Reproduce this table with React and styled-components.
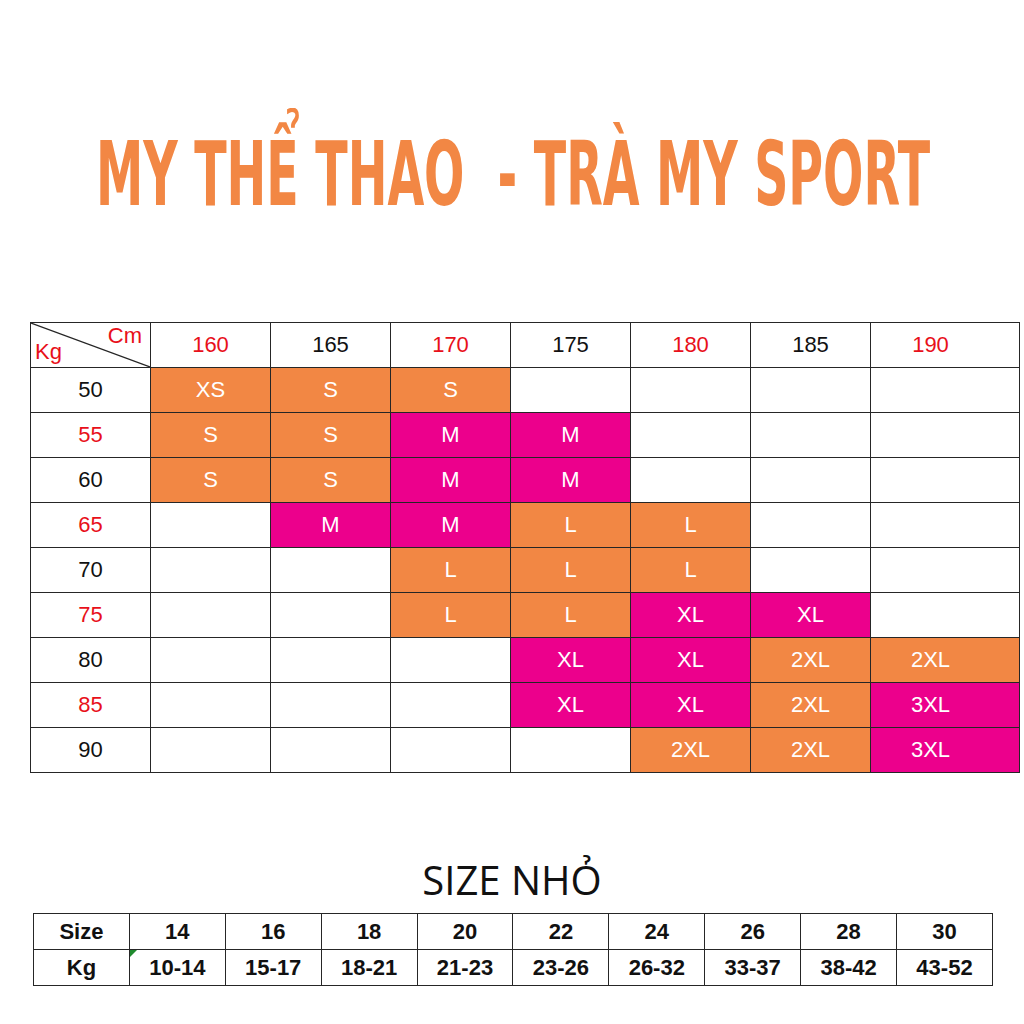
import React from "react";
import styled, { createGlobalStyle } from "styled-components";

const Global = createGlobalStyle`
  html, body { margin: 0; padding: 0; background: #fff; }
  body { width: 1024px; height: 1024px; overflow: hidden; }
`;

const ORANGE = "#F28744";
const PINK = "#EC008C";
const RED = "#E8101A";

const Page = styled.div`
  width: 1024px;
  height: 1024px;
  box-sizing: border-box;
  padding-top: 129px;
  display: flex;
  flex-direction: column;
  align-items: stretch;
  overflow: hidden;
`;

const TitleRow = styled.div`
  height: 90px;
  padding-left: 96px;
`;

const Title = styled.h1`
  margin: 0;
  width: max-content;
  font-family: "DejaVu Sans Condensed", "DejaVu Sans", sans-serif;
  font-weight: bold;
  font-size: 72px;
  line-height: 90px;
  color: ${ORANGE};
  white-space: pre;
  transform-origin: left center;
  transform: scale(0.733, 1.24);
`;

const MainTable = styled.table`
  margin: 103px 0 0 30px;
  width: 989px;
  border-collapse: collapse;
  table-layout: fixed;
  font-family: "Liberation Sans", Arial, sans-serif;
  font-size: 22px;
`;

const Cell = styled.td`
  height: 44px;
  padding: 0 ${(p) => (p.$last ? "29px" : "0")} 0 0;
  border: 1.5px solid #262626;
  text-align: center;
  vertical-align: middle;
  background: ${(p) => (p.$bg === "o" ? ORANGE : p.$bg === "p" ? PINK : "#fff")};
  color: ${(p) => (p.$bg ? "#fff" : p.$red ? RED : "#111")};
`;

const CornerCell = styled.td`
  position: relative;
  height: 44px;
  padding: 0;
  border: 1.5px solid #262626;
  color: ${RED};
`;

const Diag = styled.svg`
  position: absolute;
  inset: 0;
  width: 100%;
  height: 100%;
`;

const CornerLabel = styled.span`
  position: absolute;
  font-size: 22px;
  ${(p) => (p.$top ? "top: 0px; right: 8px;" : "bottom: 2px; left: 4px;")}
`;

const SmallTitle = styled.div`
  margin-top: 84px;
  text-align: center;
  font-family: "Open Sans", sans-serif;
  font-size: 40px;
  line-height: 46px;
  color: #111;
`;

const SmallTable = styled.table`
  margin: 10px 0 0 33px;
  width: 960px;
  border-collapse: collapse;
  table-layout: fixed;
  font-family: "Liberation Sans", Arial, sans-serif;
  font-weight: bold;
  font-size: 22px;
`;

const SmallCell = styled.td`
  position: relative;
  height: 35px;
  padding: 0;
  border: 1.5px solid #262626;
  text-align: center;
  vertical-align: middle;
  color: #111;
`;

const Flag = styled.span`
  position: absolute;
  top: 0;
  left: 0;
  width: 0;
  height: 0;
  border-top: 7px solid #1f8a2e;
  border-right: 7px solid transparent;
`;

const heights = ["160", "165", "170", "175", "180", "185", "190"];
const rows = [
  ["50", false, [["o", "XS"], ["o", "S"], ["o", "S"], null, null, null, null]],
  ["55", true, [["o", "S"], ["o", "S"], ["p", "M"], ["p", "M"], null, null, null]],
  ["60", false, [["o", "S"], ["o", "S"], ["p", "M"], ["p", "M"], null, null, null]],
  ["65", true, [null, ["p", "M"], ["p", "M"], ["o", "L"], ["o", "L"], null, null]],
  ["70", false, [null, null, ["o", "L"], ["o", "L"], ["o", "L"], null, null]],
  ["75", true, [null, null, ["o", "L"], ["o", "L"], ["p", "XL"], ["p", "XL"], null]],
  ["80", false, [null, null, null, ["p", "XL"], ["p", "XL"], ["o", "2XL"], ["o", "2XL"]]],
  ["85", true, [null, null, null, ["p", "XL"], ["p", "XL"], ["o", "2XL"], ["p", "3XL"]]],
  ["90", false, [null, null, null, null, ["o", "2XL"], ["o", "2XL"], ["p", "3XL"]]],
];

const sizes = ["14", "16", "18", "20", "22", "24", "26", "28", "30"];
const kgs = ["10-14", "15-17", "18-21", "21-23", "23-26", "26-32", "33-37", "38-42", "43-52"];

export default function App() {
  return (
    <Page>
      <Global />
      <TitleRow>
        <Title>{"MY THỂ THAO  - TRÀ MY SPORT"}</Title>
      </TitleRow>
      <MainTable>
        <colgroup>
          <col style={{ width: 120 }} />
          {heights.map((h, i) => (
            <col key={h} style={{ width: i === 6 ? 149 : 120 }} />
          ))}
        </colgroup>
        <tbody>
          <tr>
            <CornerCell>
              <Diag viewBox="0 0 120 44" preserveAspectRatio="none">
                <line x1="0" y1="0" x2="120" y2="44" stroke="#262626" strokeWidth="1.2" />
              </Diag>
              <CornerLabel $top>Cm</CornerLabel>
              <CornerLabel>Kg</CornerLabel>
            </CornerCell>
            {heights.map((h, i) => (
              <Cell key={h} $red={i % 2 === 0} $last={i === 6}>
                {h}
              </Cell>
            ))}
          </tr>
          {rows.map(([kg, red, cells]) => (
            <tr key={kg}>
              <Cell $red={red}>{kg}</Cell>
              {cells.map((c, i) => (
                <Cell key={i} $bg={c ? c[0] : undefined} $last={i === 6}>
                  {c ? c[1] : ""}
                </Cell>
              ))}
            </tr>
          ))}
        </tbody>
      </MainTable>
      <SmallTitle>SIZE NHỎ</SmallTitle>
      <SmallTable>
        <tbody>
          <tr>
            <SmallCell>Size</SmallCell>
            {sizes.map((s) => (
              <SmallCell key={s}>{s}</SmallCell>
            ))}
          </tr>
          <tr>
            <SmallCell>Kg</SmallCell>
            {kgs.map((k, i) => (
              <SmallCell key={k}>
                {i === 0 && <Flag />}
                {k}
              </SmallCell>
            ))}
          </tr>
        </tbody>
      </SmallTable>
    </Page>
  );
}
